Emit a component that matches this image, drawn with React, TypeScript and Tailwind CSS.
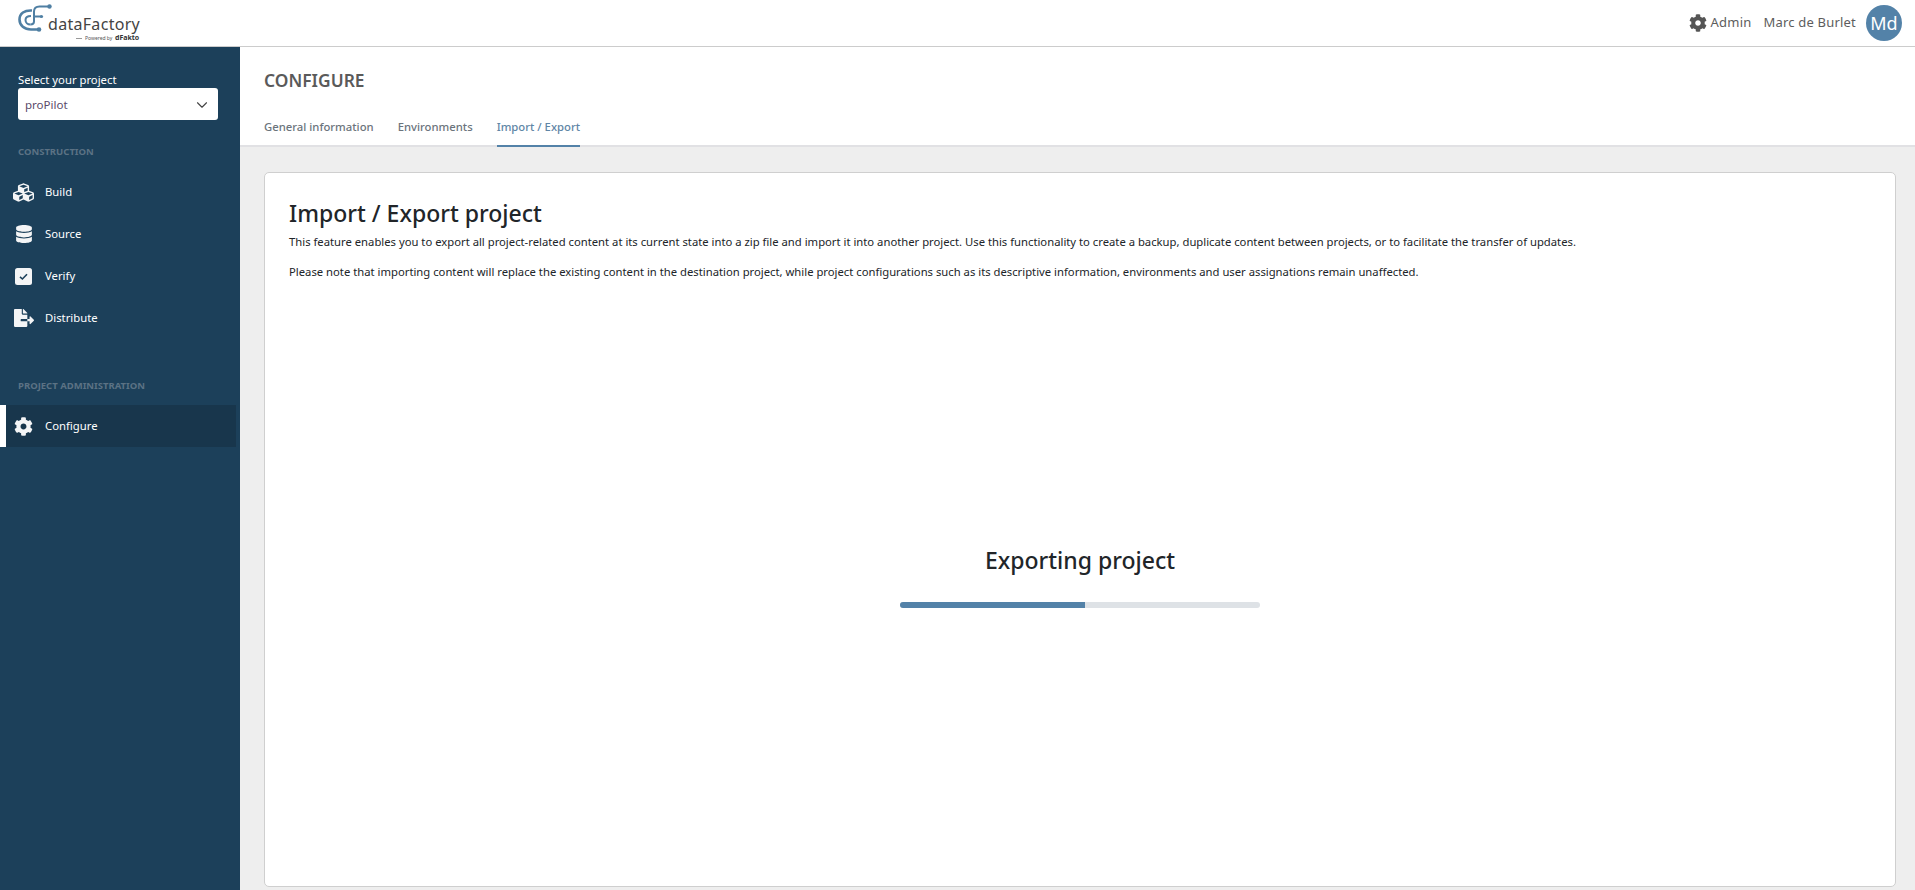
import { FaCog, FaCubes, FaDatabase, FaFileExport } from "react-icons/fa"
import { ChevronDown } from "lucide-react"

const font = "font-['Noto_Sans','Open_Sans',sans-serif]"

function Logo() {
  return (
    <div className="relative ml-[18px] h-[46px] w-[125px]">
      <svg className="absolute left-0 top-[4px]" width="34" height="30" viewBox="0 0 34 30" fill="none">
        <path d="M14 6.500C6.500 6 1.500 9.500 1.500 15.500S6.500 25.500 13 25.500H21" stroke="#4f7fa3" strokeWidth="2.600" />
        <path d="M13 12C9.500 12 7.500 13.500 7.500 16S9.500 20.500 12.500 20.500" stroke="#4f7fa3" strokeWidth="2" />
        <path d="M31.500 2.500H21.500C18 2.500 16 4.500 16 7.500V17.500C16 19.500 14.500 20.500 12.500 20.500" stroke="#4f7fa3" strokeWidth="2" />
        <path d="M16 12.500H23" stroke="#4f7fa3" strokeWidth="2" />
        <circle cx="31.500" cy="2.500" r="2.200" fill="#4f7fa3" />
        <circle cx="23.500" cy="12.500" r="1.600" fill="#4f7fa3" />
        <circle cx="21" cy="25.500" r="2.300" fill="#4f7fa3" />
      </svg>
      <span className="absolute left-[30px] top-[12px] text-[16px] leading-[24px] tracking-[0.3px] text-[#444]">dataFactory</span>
      <span className="absolute left-[58px] top-[38px] h-px w-[6px] bg-[#999]" />
      <span className="absolute left-[67px] top-[34px] text-[5px] leading-[8px] whitespace-nowrap text-[#555]">Powered by</span>
      <span className="absolute left-[97px] top-[33px] text-[7px] leading-[10px] font-bold text-[#333]">dFakto</span>
    </div>
  )
}

function VerifyIcon() {
  return (
    <svg width="17" height="17" viewBox="0 0 17 17">
      <rect width="17" height="17" rx="2.500" fill="#f4f5f6" />
      <path d="M5 8.800L7.400 11L12 6.300" fill="none" stroke="#1c405a" strokeWidth="1.600" />
    </svg>
  )
}

function NavItem({ icon, label, active }: { icon: React.ReactNode; label: string; active?: boolean }) {
  return (
    <div
      className={
        active
          ? "flex h-[42px] w-[236px] items-center border-l-[6px] border-white bg-[#18364c]"
          : "flex h-[42px] w-[236px] items-center border-l-[6px] border-transparent"
      }
    >
      <div className="flex w-[34px] shrink-0 justify-center pl-[1px] text-[#f4f5f6]">{icon}</div>
      <span className="ml-[5px] text-[11.300px] text-white">{label}</span>
    </div>
  )
}

export default function App() {
  return (
    <div className={`${font} flex h-[890px] w-[1915px] flex-col overflow-hidden bg-[#eeeeee]`}>
      {/* Top bar */}
      <header className="flex h-[47px] shrink-0 items-center justify-between border-b border-[#cccccc] bg-white">
        <Logo />
        <div className="mr-[13px] flex items-center text-[13px] text-[#5d5d5d]">
          <FaCog className="text-[18px] text-[#555]" />
          <span className="ml-[4px] tracking-[0.2px]">Admin</span>
          <span className="ml-[12px] tracking-[0.2px]">Marc de Burlet</span>
          <div className="ml-[10px] flex h-[36px] w-[36px] items-center justify-center rounded-full bg-[#5382a8] text-[18px] text-white">
            Md
          </div>
        </div>
      </header>

      <div className="flex min-h-0 flex-1">
        {/* Sidebar */}
        <aside className="w-[240px] shrink-0 bg-[#1c405a]">
          <div className="px-[18px] pt-[25px]">
            <div className="text-[11.300px] leading-[15px] text-white">Select your project</div>
            <div className="mt-[1px] flex h-[32px] w-[200px] items-center justify-between rounded-[3px] bg-white pt-[1px] pl-[7px] pr-[7px] text-[11.500px] text-[#5a4a6a]">
              proPilot
              <ChevronDown size={18} strokeWidth={1.500} className="text-[#444]" />
            </div>
            <div className="mt-[25px] text-[9.500px] leading-[14px] font-bold text-[#5b7284]">CONSTRUCTION</div>
          </div>
          <nav className="mt-[12px]">
            <NavItem icon={<FaCubes className="text-[21px]" />} label="Build" />
            <NavItem icon={<FaDatabase className="text-[18px]" />} label="Source" />
            <NavItem icon={<VerifyIcon />} label="Verify" />
            <NavItem icon={<FaFileExport className="text-[20px]" />} label="Distribute" />
          </nav>
          <div className="mt-[40px] px-[18px] text-[9.500px] leading-[14px] font-bold text-[#5b7284]">PROJECT ADMINISTRATION</div>
          <div className="mt-[12px]">
            <NavItem icon={<FaCog className="text-[19px]" />} label="Configure" active />
          </div>
        </aside>

        {/* Main */}
        <main className="flex min-w-0 flex-1 flex-col">
          <div className="h-[100px] shrink-0 border-b-2 border-[#e1e1e4] bg-white pl-[24px]">
            <h2 className="pt-[21px] text-[17.400px] leading-[24px] font-semibold text-[#5a5a5a]">CONFIGURE</h2>
            <div className="mt-[26px] flex gap-[24px] text-[11.300px] font-medium text-[#6b747c]">
              <span className="h-[29px] leading-[18px]">General information</span>
              <span className="h-[29px] leading-[18px]">Environments</span>
              <span className="h-[29px] border-b-2 border-[#5382a8] leading-[18px] text-[#5f86a6]">Import / Export</span>
            </div>
          </div>
          <div className="flex min-h-0 flex-1 pt-[25px] pr-[19px] pb-[3px] pl-[24px]">
            <section className="flex flex-1 flex-col rounded-[5px] border border-[#cfcfcf] bg-white px-[24px]">
              <h1 className="pt-[24px] text-[23px] leading-[32px] font-medium text-[#212529]">Import / Export project</h1>
              <p className="mt-[5px] text-[11.280px] leading-[15px] text-[#212529]">
                This feature enables you to export all project-related content at its current state into a zip file and import it into another project. Use this functionality to create a backup, duplicate content between projects, or to facilitate the transfer of updates.
              </p>
              <p className="mt-[15px] text-[11.280px] leading-[15px] text-[#212529]">
                Please note that importing content will replace the existing content in the destination project, while project configurations such as its descriptive information, environments and user assignations remain unaffected.
              </p>
              <div className="mt-[265px] flex flex-col items-center">
                <div className="text-[23px] leading-[32px] font-medium text-[#212529]">Exporting project</div>
                <div className="mt-[26px] h-[6px] w-[360px] overflow-hidden rounded-full bg-[#dee2e6]">
                  <div className="h-full w-[185px] bg-[#5382a8]" />
                </div>
              </div>
            </section>
          </div>
        </main>
      </div>
    </div>
  )
}
